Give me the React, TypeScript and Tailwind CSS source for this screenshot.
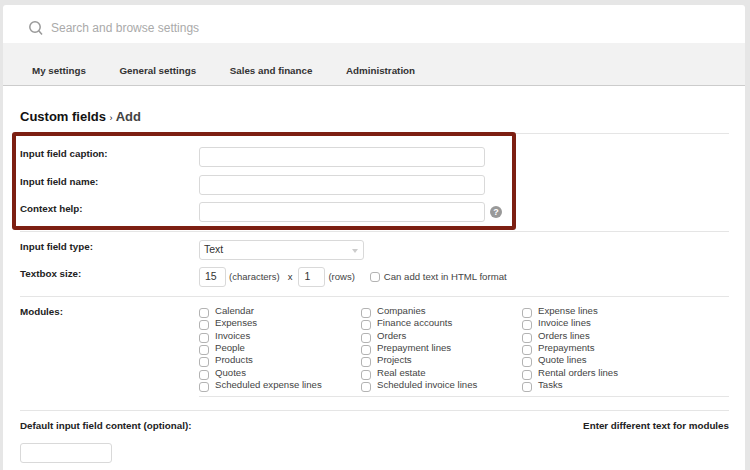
const mods = [
  ["Calendar", "Companies", "Expense lines"],
  ["Expenses", "Finance accounts", "Invoice lines"],
  ["Invoices", "Orders", "Orders lines"],
  ["People", "Prepayment lines", "Prepayments"],
  ["Products", "Projects", "Quote lines"],
  ["Quotes", "Real estate", "Rental orders lines"],
  ["Scheduled expense lines", "Scheduled invoice lines", "Tasks"],
];

function Box({ className = "" }: { className?: string }) {
  return <div className={`h-[20px] rounded-[3px] border border-[#d9d9d9] bg-white ${className}`} />;
}

function Check() {
  return <span className="mt-[3px] h-[10px] w-[10px] shrink-0 rounded-[3px] border border-[#b3b3b3] bg-white" />;
}

function Row({ label, children }: { label: string; children: React.ReactNode }) {
  return (
    <div className="flex">
      <div className="w-[179px] shrink-0 text-[9.8px] leading-[13px] font-bold text-[#222]">{label}</div>
      {children}
    </div>
  );
}

export default function App() {
  return (
    <div className="relative h-[470px] w-[750px] overflow-hidden bg-[#e6e6e6] pt-[5px] pl-[3px] font-['Liberation_Sans',sans-serif]">
      <div className="h-[465px] w-[742px] overflow-hidden rounded-t-[3px] bg-white">
        <div className="flex h-[38px] items-center pt-[8px] pl-[25px]">
          <svg width="16" height="16" viewBox="0 0 16 16" fill="none" stroke="#999" strokeWidth="1.5">
            <circle cx="7" cy="7" r="5.2" />
            <path d="M10.8 10.8 14 14.5" />
          </svg>
          <span className="ml-[7px] text-[12px] text-[#aaa]">Search and browse settings</span>
        </div>
        <div className="flex h-[43px] items-center gap-[33.5px] border-b border-[#cccccc] bg-[#f2f2f2] pt-[14px] pl-[29px] text-[9.8px] font-bold text-[#333]">
          <span>My settings</span>
          <span>General settings</span>
          <span>Sales and finance</span>
          <span>Administration</span>
        </div>
        <div className="pr-[16px] pl-[17px]">
          <h1 className="mt-[22px] text-[13px] leading-[17px] font-bold text-[#111]">
            Custom fields <span className="text-[9px] font-normal">›</span> <span className="text-[#444]">Add</span>
          </h1>
          <div className="mt-[6px] border-t border-[#e5e5e5] pt-[13px] pb-[9px]">
            <div className="flex flex-col gap-[7.5px]">
              <Row label="Input field caption:"><Box className="w-[286px]" /></Row>
              <Row label="Input field name:"><Box className="w-[286px]" /></Row>
              <Row label="Context help:">
                <Box className="w-[286px]" />
                <span className="mt-[4px] ml-[5px] flex h-[12px] w-[12px] items-center justify-center rounded-full bg-[#999] text-[9px] leading-none font-bold text-white">?</span>
              </Row>
            </div>
          </div>
          <div className="border-t border-[#e5e5e5] pt-[8px] pb-[9px]">
            <Row label="Input field type:">
              <div className="flex h-[20px] w-[165px] items-center justify-between rounded-[3px] border border-[#d9d9d9] pr-[5px] pl-[4px] text-[10.5px] text-[#333]">
                Text
                <span className="mt-[2px] h-0 w-0 border-x-[3px] border-t-[4px] border-x-transparent border-t-[#ccc]" />
              </div>
            </Row>
            <div className="mt-[7px]">
              <Row label="Textbox size:">
                <div className="flex items-center text-[9.5px] text-[#444]">
                  <div className="flex h-[20px] w-[27px] items-center rounded-[3px] border border-[#d9d9d9] pl-[5px] text-[10.5px] text-[#333]">15</div>
                  <span className="ml-[3px]">(characters)</span>
                  <span className="mr-[6px] ml-[8px] text-[#333]">x</span>
                  <div className="flex h-[20px] w-[27px] items-center rounded-[3px] border border-[#d9d9d9] pl-[5px] text-[10.5px] text-[#333]">1</div>
                  <span className="ml-[3px]">(rows)</span>
                  <span className="ml-[15px] h-[10px] w-[10px] rounded-[3px] border border-[#b3b3b3]" />
                  <span className="ml-[4px] text-[9.6px]">Can add text in HTML format</span>
                </div>
              </Row>
            </div>
          </div>
          <div className="border-t border-[#e5e5e5] pt-[8px]">
            <Row label="Modules:">
              <div className="flex-1">
                <div className="border-b border-[#e5e5e5] pb-[5px]">
                  {mods.map((r) => (
                    <div key={r[0]} className="grid h-[12.35px] grid-cols-[162px_161px_1fr]">
                      {r.map((m) => (
                        <div key={m} className="flex text-[9.6px] leading-[12px] text-[#444]">
                          <Check />
                          <span className="ml-[6px] whitespace-nowrap">{m}</span>
                        </div>
                      ))}
                    </div>
                  ))}
                </div>
              </div>
            </Row>
          </div>
          <div className="mt-[13px] border-t border-[#e5e5e5] pt-[8px]">
            <div className="flex justify-between text-[9.8px] leading-[13px] font-bold text-[#222]">
              <span>Default input field content (optional):</span>
              <span>Enter different text for modules</span>
            </div>
            <Box className="mt-[11px] w-[92px]" />
          </div>
        </div>
      </div>
      <div className="absolute top-[132px] left-[12px] h-[98px] w-[504px] rounded-[3px] border-[4px] border-[#7d1f12]" />
    </div>
  );
}
